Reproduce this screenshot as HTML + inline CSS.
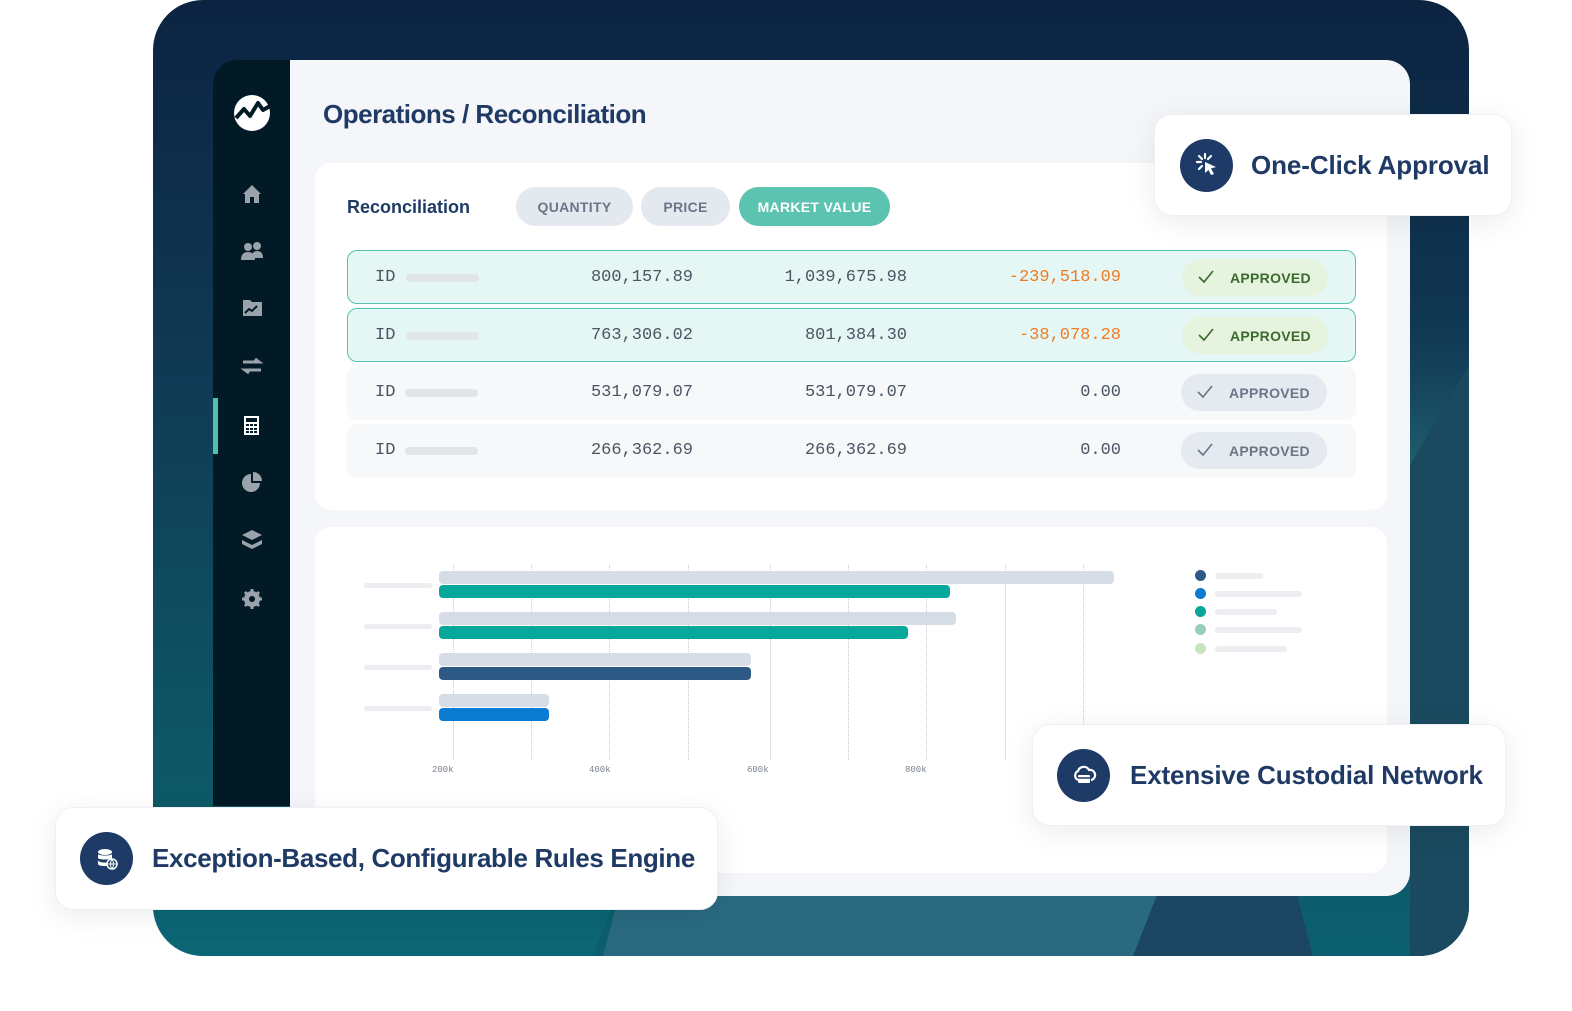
<!DOCTYPE html>
<html><head><meta charset="utf-8"><style>
*{margin:0;padding:0;box-sizing:border-box}
body{width:1572px;height:1011px;background:#fff;position:relative;overflow:hidden;font-family:"Liberation Sans",sans-serif}
.abs{position:absolute}
.frame{left:153px;top:0;width:1316px;height:956px;border-radius:50px;overflow:hidden;background:linear-gradient(180deg,#0c2442 0%,#103a55 40%,#0e5866 80%,#0b5f6e 100%)}
.side{left:213px;top:60px;width:78px;height:746px;background:#021a26;border-top-left-radius:24px}
.main{left:290px;top:60px;width:1120px;height:836px;background:#f4f6f9;border-radius:0 24px 24px 0}
.card{background:#fff;border-radius:16px}
h1{position:absolute;left:323px;top:99px;font-size:26px;font-weight:700;color:#1f3a64;letter-spacing:-.5px}
.pill{position:absolute;top:187px;height:39px;border-radius:20px;background:#e4e8ef;color:#6b7686;font-size:14px;font-weight:700;display:flex;align-items:center;justify-content:center;letter-spacing:.3px}
.row{position:absolute;left:347px;width:1009px;height:54px;border-radius:10px;background:#f6f8fa}
.row.g{background:#e5f7f4;border:1.5px solid #56c3b0}
.row span{position:absolute;top:17px;font-family:"Liberation Mono",monospace;font-size:17px;color:#4a5563}
.ph{position:absolute;left:58px;top:23px;width:73px;height:8px;border-radius:4px;background:#dfe5e8}
.badge{position:absolute;left:834px;top:8px;width:146px;height:37px;border-radius:19px;background:#e5e9f0;color:#6b7686;font-size:14px;font-weight:700;letter-spacing:.3px}
.g .badge{background:#e6f3df;color:#3b6b2c}
.badge b{position:absolute;left:48px;top:11px}
.feat{background:#fff;border-radius:18px;box-shadow:0 6px 30px rgba(0,0,0,.08);border:1px solid #eef0f3;display:flex;align-items:center}
.ic{width:53px;height:53px;border-radius:50%;background:#1e3a66;display:flex;align-items:center;justify-content:center;flex:none}
.ft{font-size:26px;font-weight:700;color:#1f3a64;margin-left:20px;white-space:nowrap}
.bar{position:absolute;height:13px;border-radius:4px;left:439px}
.lbl{position:absolute;left:364px;width:68px;height:5px;background:#eceef1;border-radius:3px}
.grid{position:absolute;top:565px;height:195px;border-left:1px dotted #c4c9d0}
.ax{position:absolute;top:765px;font-family:"Liberation Mono",monospace;font-size:9px;color:#7a828c}
.dot{position:absolute;left:1195px;width:11px;height:11px;border-radius:50%}
.ll{position:absolute;left:1215px;height:6px;border-radius:3px;background:#eceef1}
</style></head><body>
<div class="abs frame">
<svg width="1316" height="956" style="position:absolute;left:0;top:0">
<defs><linearGradient id="tg" x1="0" y1="0" x2="0" y2="1"><stop offset="0" stop-color="#0c2442" stop-opacity="0"/><stop offset=".35" stop-color="#236a78"/><stop offset="1" stop-color="#2a7a82"/></linearGradient></defs>
<polygon points="1257,240 1316,240 1316,956 1257,956" fill="url(#tg)"/>
<polygon points="1257,465 1316,365 1316,956 1257,956" fill="#1b4a60"/>
<polygon points="0,880 470,880 440,956 0,956" fill="#0d6a7a" opacity=".6"/>
<polygon points="470,880 1010,880 980,956 450,956" fill="#2a6a80"/>
<polygon points="1010,880 1140,880 1160,956 980,956" fill="#1b4560"/>
</svg>
</div>
<div class="abs side">
<svg width="78" height="746" style="position:absolute;left:0;top:0">
<circle cx="39" cy="53" r="18" fill="#fff"/>
<path d="M23 58 L31 49 L37 56 L45 43 L50 50 L57 46" stroke="#021a26" stroke-width="4" fill="none" stroke-linejoin="round"/>
<g fill="#9aa3ab">
<path d="M30 134 L39 125 L48 134 L46 134 L46 143 L41 143 L41 137 L37 137 L37 143 L32 143 L32 134Z"/>
<circle cx="35" cy="187" r="4"/><circle cx="44" cy="186" r="4"/><path d="M28 200 q0-8 7-8 q7 0 7 8z M38 198 q1-7 6-7 q6 0 6 7z"/>
<path d="M30 240 h7 l2 2 h10 v14 h-19z" /><path d="M32 253 l4-4 3 2 5-5" stroke="#021a26" stroke-width="2" fill="none"/>
<path d="M30 302 h16 l-4-3 M48 310 h-16 l4 3" stroke="#9aa3ab" stroke-width="3" fill="none"/>
<rect x="31" y="356" width="15" height="19" fill="#fff"/><g fill="#021a26"><rect x="33" y="358" width="11" height="4"/><rect x="33" y="364" width="3" height="2"/><rect x="37" y="364" width="3" height="2"/><rect x="41" y="364" width="3" height="2"/><rect x="33" y="368" width="3" height="2"/><rect x="37" y="368" width="3" height="2"/><rect x="41" y="368" width="3" height="2"/><rect x="33" y="371" width="3" height="2"/><rect x="37" y="371" width="3" height="2"/><rect x="41" y="371" width="3" height="2"/></g>
<path d="M38 414 a9 9 0 1 0 9 9 h-9z"/><path d="M40 412 a9 9 0 0 1 9 9 h-9z"/>
<path d="M39 470 l10 5 -10 5 -10-5z"/><path d="M29 480 l10 5 10-5 v4 l-10 5-10-5z"/>
<circle cx="39" cy="539" r="6" fill="none" stroke="#9aa3ab" stroke-width="4"/><g stroke="#9aa3ab" stroke-width="3"><path d="M39 529v20M29 539h20M32 532l14 14M46 532l-14 14"/></g><circle cx="39" cy="539" r="3" fill="#021a26"/>
</g>
</svg>
<div class="abs" style="left:0;top:338px;width:5px;height:56px;background:#4fc1ae"></div>
</div>
<div class="abs main"></div>
<h1>Operations / Reconciliation</h1>
<div class="abs card" style="left:315px;top:163px;width:1072px;height:347px"></div>
<div class="abs card" style="left:315px;top:527px;width:1072px;height:346px"></div>
<div class="abs" style="left:347px;top:197px;font-size:18px;font-weight:700;color:#1f3a64">Reconciliation</div>
<div class="pill" style="left:516px;width:117px">QUANTITY</div>
<div class="pill" style="left:641px;width:89px">PRICE</div>
<div class="pill" style="left:739px;width:151px;background:#5cc3b0;color:#fff">MARKET VALUE</div>

<div class="row g" style="top:250px"><span style="left:27px">ID</span><div class="ph"></div><span style="right:662px">800,157.89</span><span style="right:448px">1,039,675.98</span><span style="right:234px;color:#f07a24">-239,518.09</span><div class="badge"><svg class="abs" style="left:16px;top:11px" width="16" height="14"><path d="M1 7 l5 5 9-11" stroke="currentColor" stroke-width="1.6" fill="none"/></svg><b>APPROVED</b></div></div>
<div class="row g" style="top:308px"><span style="left:27px">ID</span><div class="ph"></div><span style="right:662px">763,306.02</span><span style="right:448px">801,384.30</span><span style="right:234px;color:#f07a24">-38,078.28</span><div class="badge"><svg class="abs" style="left:16px;top:11px" width="16" height="14"><path d="M1 7 l5 5 9-11" stroke="currentColor" stroke-width="1.6" fill="none"/></svg><b>APPROVED</b></div></div>
<div class="row" style="top:366px"><span style="left:28px">ID</span><div class="ph"></div><span style="right:663px">531,079.07</span><span style="right:449px">531,079.07</span><span style="right:235px">0.00</span><div class="badge" style="left:834px"><svg class="abs" style="left:16px;top:11px" width="16" height="14"><path d="M1 7 l5 5 9-11" stroke="currentColor" stroke-width="1.6" fill="none"/></svg><b>APPROVED</b></div></div>
<div class="row" style="top:424px"><span style="left:28px">ID</span><div class="ph"></div><span style="right:663px">266,362.69</span><span style="right:449px">266,362.69</span><span style="right:235px">0.00</span><div class="badge"><svg class="abs" style="left:16px;top:11px" width="16" height="14"><path d="M1 7 l5 5 9-11" stroke="currentColor" stroke-width="1.6" fill="none"/></svg><b>APPROVED</b></div></div>

<div class="grid" style="left:453px"></div><div class="grid" style="left:531px"></div><div class="grid" style="left:609px"></div><div class="grid" style="left:688px"></div><div class="grid" style="left:770px"></div><div class="grid" style="left:848px"></div><div class="grid" style="left:926px"></div><div class="grid" style="left:1005px"></div><div class="grid" style="left:1083px"></div>
<div class="lbl" style="top:583px"></div><div class="lbl" style="top:624px"></div><div class="lbl" style="top:665px"></div><div class="lbl" style="top:706px"></div>
<div class="bar" style="top:571px;width:675px;background:#d6dde7"></div>
<div class="bar" style="top:585px;width:511px;background:#06a89c"></div>
<div class="bar" style="top:612px;width:517px;background:#d6dde7"></div>
<div class="bar" style="top:626px;width:469px;background:#06a89c"></div>
<div class="bar" style="top:653px;width:312px;background:#d6dde7"></div>
<div class="bar" style="top:667px;width:312px;background:#2d5987"></div>
<div class="bar" style="top:694px;width:110px;background:#d6dde7"></div>
<div class="bar" style="top:708px;width:110px;background:#0a7bd0"></div>
<div class="ax" style="left:432px">200k</div><div class="ax" style="left:589px">400k</div><div class="ax" style="left:747px">600k</div><div class="ax" style="left:905px">800k</div>
<div class="dot" style="top:570px;background:#2d5987"></div><div class="ll" style="top:573px;width:48px"></div>
<div class="dot" style="top:588px;background:#0a7bd0"></div><div class="ll" style="top:591px;width:87px"></div>
<div class="dot" style="top:606px;background:#06a89c"></div><div class="ll" style="top:609px;width:62px"></div>
<div class="dot" style="top:624px;background:#97cdb9"></div><div class="ll" style="top:627px;width:87px"></div>
<div class="dot" style="top:643px;background:#c8e3c0"></div><div class="ll" style="top:646px;width:72px"></div>

<div class="abs feat" style="left:1154px;top:114px;width:358px;height:102px;padding-left:25px">
<div class="ic"><svg width="30" height="30" viewBox="0 0 30 30"><g stroke="#fff" stroke-width="2.2" stroke-linecap="round"><path d="M13 4v4M5 12h4M7 6l3 3M19 6l-3 3M7 19l3-3"/></g><path d="M13 12 L24 17 L19 18.5 L22 24 L19 25 L16.5 20 L13 23z" fill="#fff"/></svg></div>
<div class="ft" style="margin-left:18px;letter-spacing:-.1px">One-Click Approval</div></div>

<div class="abs feat" style="left:1032px;top:724px;width:474px;height:102px;padding-left:24px">
<div class="ic"><svg width="30" height="30" viewBox="0 0 30 30"><path d="M9 20 a5 5 0 0 1 0-9 a6 6 0 0 1 11-1 a5 5 0 0 1 2 10" stroke="#fff" stroke-width="2.2" fill="none"/><rect x="9" y="15" width="12" height="8" rx="1" fill="#fff"/><path d="M9 18h12" stroke="#1e3a66" stroke-width="1.5"/></svg></div>
<div class="ft" style="letter-spacing:-.15px">Extensive Custodial Network</div></div>

<div class="abs feat" style="left:55px;top:807px;width:663px;height:103px;padding-left:24px">
<div class="ic"><svg width="30" height="30" viewBox="0 0 30 30"><ellipse cx="13" cy="8" rx="7" ry="3" fill="#fff"/><path d="M6 10v4c0 2 14 2 14 0v-4c0 2-14 2-14 0zM6 16v4c0 2 8 2.5 10 1.5v-3c-2 .5-10 0-10-2.5z" fill="#fff"/><circle cx="20" cy="20" r="5" fill="#1e3a66" stroke="#fff" stroke-width="1.5"/><path d="M15 20h10M20 15c-2 3-2 7 0 10M20 15c2 3 2 7 0 10" stroke="#fff" stroke-width="1" fill="none"/></svg></div>
<div class="ft" style="margin-left:19px;letter-spacing:-.35px">Exception-Based, Configurable Rules Engine</div></div>
</body></html>
